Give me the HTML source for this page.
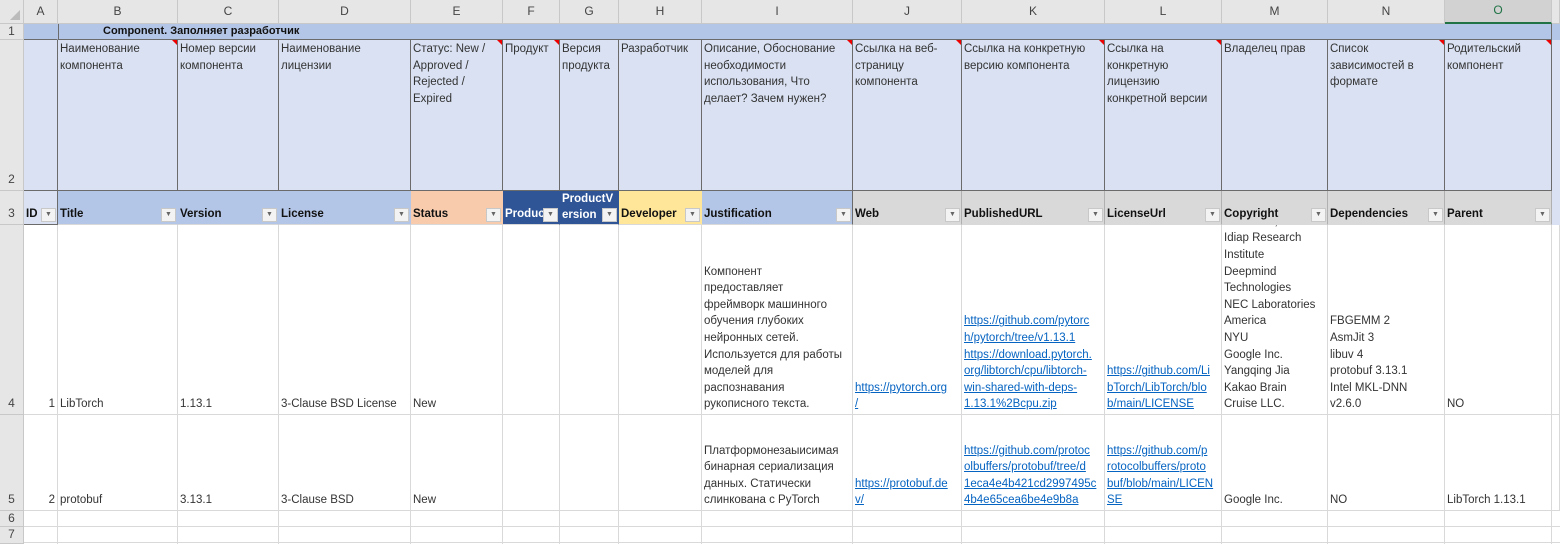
<!DOCTYPE html>
<html><head><meta charset="utf-8"><style>
*{margin:0;padding:0;box-sizing:border-box}
body{width:1560px;height:544px;overflow:hidden;background:#fff;font-family:"Liberation Sans","DejaVu Sans",sans-serif;font-size:11.5px;color:#333;position:relative}
.c{position:absolute;overflow:hidden;border-right:1px solid #d9d9d9;border-bottom:1px solid #d9d9d9;line-height:16.6px;padding:0 2px 1px 2px;display:flex;flex-direction:column;justify-content:flex-end;white-space:nowrap}
.t{justify-content:flex-start;padding-top:1px}
.h{background:#e6e6e6;color:#444;justify-content:center;align-items:center;border-color:#c8c8c8;font-size:12px}
.dk{border-right:1px solid #6b6b6b;border-bottom:1px solid #6b6b6b}
.b{font-weight:bold;color:#111;font-size:11.5px}
.r{align-items:flex-end}
a{color:#0563c1;text-decoration:underline}
.dd{position:absolute;width:15px;height:14px;background:#f3f3f3;border:1px solid #c8c8c8;font-size:7px;color:#666;text-align:center;line-height:12px}
.tri{position:absolute;width:0;height:0;border-top:5px solid #e00;border-left:5px solid transparent}
</style></head><body>

<div class="c h" style="left:0;top:0;width:24px;height:24px"><svg width="10" height="10" style="position:absolute;right:3px;bottom:3px"><path d="M10 0L10 10L0 10Z" fill="#bbb"/></svg></div>
<div class="c h" style="left:24px;top:0;width:34px;height:24px">A</div>
<div class="c h" style="left:58px;top:0;width:120px;height:24px">B</div>
<div class="c h" style="left:178px;top:0;width:101px;height:24px">C</div>
<div class="c h" style="left:279px;top:0;width:132px;height:24px">D</div>
<div class="c h" style="left:411px;top:0;width:92px;height:24px">E</div>
<div class="c h" style="left:503px;top:0;width:57px;height:24px">F</div>
<div class="c h" style="left:560px;top:0;width:59px;height:24px">G</div>
<div class="c h" style="left:619px;top:0;width:83px;height:24px">H</div>
<div class="c h" style="left:702px;top:0;width:151px;height:24px">I</div>
<div class="c h" style="left:853px;top:0;width:109px;height:24px">J</div>
<div class="c h" style="left:962px;top:0;width:143px;height:24px">K</div>
<div class="c h" style="left:1105px;top:0;width:117px;height:24px">L</div>
<div class="c h" style="left:1222px;top:0;width:106px;height:24px">M</div>
<div class="c h" style="left:1328px;top:0;width:117px;height:24px">N</div>
<div class="c h" style="left:1445px;top:0;width:107px;height:24px;background:#d2d2d2;color:#217346;border-bottom:2px solid #217346">O</div>
<div class="c h" style="left:1552px;top:0;width:8px;height:24px"></div>

<div class="c h" style="left:0;top:24px;width:24px;height:16px">1</div>
<div class="c h" style="left:0;top:40px;width:24px;height:151px;justify-content:flex-end;padding-bottom:2px">2</div>
<div class="c h" style="left:0;top:191px;width:24px;height:34px;justify-content:flex-end;padding-bottom:2px">3</div>
<div class="c h" style="left:0;top:225px;width:24px;height:190px;justify-content:flex-end;padding-bottom:2px">4</div>
<div class="c h" style="left:0;top:415px;width:24px;height:96px;justify-content:flex-end;padding-bottom:2px">5</div>
<div class="c h" style="left:0;top:511px;width:24px;height:16px">6</div>
<div class="c h" style="left:0;top:527px;width:24px;height:17px">7</div>

<div class="c dk" style="left:24px;top:24px;width:34px;height:16px;background:#b4c6e7;border-right:1px solid #b4c6e7"></div>
<div class="c dk b" style="left:58px;top:24px;width:1494px;height:16px;background:#b4c6e7;border-left:1px solid #6b6b6b;padding-left:44px;justify-content:center;font-size:11px">Component. Заполняет разработчик</div>
<div class="c" style="left:1552px;top:24px;width:8px;height:16px;background:#b4c6e7;border:0"></div>

<div class="c dk t" style="left:24px;top:40px;width:34px;height:151px;background:#d9e1f2;border-right:1px solid #6b6b6b"></div>
<div class="c dk t" style="left:58px;top:40px;width:120px;height:151px;background:#d9e1f2">Наименование<br>компонента</div>
<div class="c dk t" style="left:178px;top:40px;width:101px;height:151px;background:#d9e1f2">Номер версии<br>компонента</div>
<div class="c dk t" style="left:279px;top:40px;width:132px;height:151px;background:#d9e1f2">Наименование<br>лицензии</div>
<div class="c dk t" style="left:411px;top:40px;width:92px;height:151px;background:#d9e1f2">Статус: New /<br>Approved /<br>Rejected /<br>Expired</div>
<div class="c dk t" style="left:503px;top:40px;width:57px;height:151px;background:#d9e1f2">Продукт</div>
<div class="c dk t" style="left:560px;top:40px;width:59px;height:151px;background:#d9e1f2">Версия<br>продукта</div>
<div class="c dk t" style="left:619px;top:40px;width:83px;height:151px;background:#d9e1f2">Разработчик</div>
<div class="c dk t" style="left:702px;top:40px;width:151px;height:151px;background:#d9e1f2">Описание, Обоснование<br>необходимости<br>использования, Что<br>делает? Зачем нужен?</div>
<div class="c dk t" style="left:853px;top:40px;width:109px;height:151px;background:#d9e1f2">Ссылка на веб-<br>страницу<br>компонента</div>
<div class="c dk t" style="left:962px;top:40px;width:143px;height:151px;background:#d9e1f2">Ссылка на конкретную<br>версию компонента</div>
<div class="c dk t" style="left:1105px;top:40px;width:117px;height:151px;background:#d9e1f2">Ссылка на<br>конкретную<br>лицензию<br>конкретной версии</div>
<div class="c dk t" style="left:1222px;top:40px;width:106px;height:151px;background:#d9e1f2">Владелец прав</div>
<div class="c dk t" style="left:1328px;top:40px;width:117px;height:151px;background:#d9e1f2">Список<br>зависимостей в<br>формате</div>
<div class="c dk t" style="left:1445px;top:40px;width:107px;height:151px;background:#d9e1f2">Родительский<br>компонент</div>
<div class="c" style="left:1552px;top:40px;width:8px;height:151px;background:#d9e1f2;border:0"></div>

<div class="tri" style="left:172px;top:40px"></div>
<div class="tri" style="left:497px;top:40px"></div>
<div class="tri" style="left:554px;top:40px"></div>
<div class="tri" style="left:847px;top:40px"></div>
<div class="tri" style="left:956px;top:40px"></div>
<div class="tri" style="left:1099px;top:40px"></div>
<div class="tri" style="left:1216px;top:40px"></div>
<div class="tri" style="left:1439px;top:40px"></div>
<div class="tri" style="left:1546px;top:40px"></div>

<div class="c b" style="left:24px;top:191px;width:34px;height:34px;background:#d9e1f2;border-color:#6b6b6b">ID</div>
<div class="c b" style="left:58px;top:191px;width:120px;height:34px;background:#b4c6e7;border-right-color:#b4c6e7">Title</div>
<div class="c b" style="left:178px;top:191px;width:101px;height:34px;background:#b4c6e7;border-right-color:#b4c6e7">Version</div>
<div class="c b" style="left:279px;top:191px;width:132px;height:34px;background:#b4c6e7;border-right-color:#b4c6e7">License</div>
<div class="c b" style="left:411px;top:191px;width:92px;height:34px;background:#f8cbad;border-right-color:#f8cbad">Status</div>
<div class="c b" style="left:503px;top:191px;width:57px;height:34px;background:#2f5597;color:#fff;border-right-color:#2f5597">Produc</div>
<div class="c b" style="left:560px;top:191px;width:59px;height:34px;background:#2f5597;color:#fff;border-right-color:#2f5597;line-height:16px">ProductV<br>ersion</div>
<div class="c b" style="left:619px;top:191px;width:83px;height:34px;background:#ffe699;border-right-color:#ffe699">Developer</div>
<div class="c b" style="left:702px;top:191px;width:151px;height:34px;background:#b4c6e7;border-right-color:#6b6b6b">Justification</div>
<div class="c b" style="left:853px;top:191px;width:109px;height:34px;background:#d9d9d9;border-right-color:#b0b0b0">Web</div>
<div class="c b" style="left:962px;top:191px;width:143px;height:34px;background:#d9d9d9;border-right-color:#b0b0b0">PublishedURL</div>
<div class="c b" style="left:1105px;top:191px;width:117px;height:34px;background:#d9d9d9;border-right-color:#b0b0b0">LicenseUrl</div>
<div class="c b" style="left:1222px;top:191px;width:106px;height:34px;background:#d9d9d9;border-right-color:#b0b0b0">Copyright</div>
<div class="c b" style="left:1328px;top:191px;width:117px;height:34px;background:#d9d9d9;border-right-color:#b0b0b0">Dependencies</div>
<div class="c b" style="left:1445px;top:191px;width:107px;height:34px;background:#d9d9d9;border-right-color:#b0b0b0">Parent</div>
<div class="c" style="left:1552px;top:191px;width:8px;height:34px;background:#d9e1f2;border:0"></div>
<div style="position:absolute;left:24px;top:190px;width:1528px;height:1px;background:#6b6b6b"></div>

<div class="dd" style="left:41px;top:208px">▼</div>
<div class="dd" style="left:161px;top:208px">▼</div>
<div class="dd" style="left:262px;top:208px">▼</div>
<div class="dd" style="left:394px;top:208px">▼</div>
<div class="dd" style="left:486px;top:208px">▼</div>
<div class="dd" style="left:543px;top:208px">▼</div>
<div class="dd" style="left:602px;top:208px">▼</div>
<div class="dd" style="left:685px;top:208px">▼</div>
<div class="dd" style="left:836px;top:208px">▼</div>
<div class="dd" style="left:945px;top:208px">▼</div>
<div class="dd" style="left:1088px;top:208px">▼</div>
<div class="dd" style="left:1205px;top:208px">▼</div>
<div class="dd" style="left:1311px;top:208px">▼</div>
<div class="dd" style="left:1428px;top:208px">▼</div>
<div class="dd" style="left:1535px;top:208px">▼</div>

<div class="c r" style="left:24px;top:225px;width:34px;height:190px">1</div>
<div class="c" style="left:58px;top:225px;width:120px;height:190px">LibTorch</div>
<div class="c" style="left:178px;top:225px;width:101px;height:190px">1.13.1</div>
<div class="c" style="left:279px;top:225px;width:132px;height:190px">3-Clause BSD License</div>
<div class="c" style="left:411px;top:225px;width:92px;height:190px">New</div>
<div class="c" style="left:503px;top:225px;width:57px;height:190px"></div>
<div class="c" style="left:560px;top:225px;width:59px;height:190px"></div>
<div class="c" style="left:619px;top:225px;width:83px;height:190px"></div>
<div class="c" style="left:702px;top:225px;width:151px;height:190px">Компонент<br>предоставляет<br>фреймворк машинного<br>обучения глубоких<br>нейронных сетей.<br>Используется для работы<br>моделей для<br>распознавания<br>рукописного текста.</div>
<div class="c" style="left:853px;top:225px;width:109px;height:190px"><a>https://pytorch.org<br>/</a></div>
<div class="c" style="left:962px;top:225px;width:143px;height:190px"><a>https://github.com/pytorc<br>h/pytorch/tree/v1.13.1<br>https://download.pytorch.<br>org/libtorch/cpu/libtorch-<br>win-shared-with-deps-<br>1.13.1%2Bcpu.zip</a></div>
<div class="c" style="left:1105px;top:225px;width:117px;height:190px"><a>https://github.com/Li<br>bTorch/LibTorch/blo<br>b/main/LICENSE</a></div>
<div class="c" style="left:1222px;top:225px;width:106px;height:190px">Facebook, Inc<br>Idiap Research<br>Institute<br>Deepmind<br>Technologies<br>NEC Laboratories<br>America<br>NYU<br>Google Inc.<br>Yangqing Jia<br>Kakao Brain<br>Cruise LLC.</div>
<div class="c" style="left:1328px;top:225px;width:117px;height:190px">FBGEMM 2<br>AsmJit 3<br>libuv 4<br>protobuf 3.13.1<br>Intel MKL-DNN<br>v2.6.0</div>
<div class="c" style="left:1445px;top:225px;width:107px;height:190px">NO</div>
<div class="c" style="left:1552px;top:225px;width:8px;height:190px"></div>

<div class="c r" style="left:24px;top:415px;width:34px;height:96px">2</div>
<div class="c" style="left:58px;top:415px;width:120px;height:96px">protobuf</div>
<div class="c" style="left:178px;top:415px;width:101px;height:96px">3.13.1</div>
<div class="c" style="left:279px;top:415px;width:132px;height:96px">3-Clause BSD</div>
<div class="c" style="left:411px;top:415px;width:92px;height:96px">New</div>
<div class="c" style="left:503px;top:415px;width:57px;height:96px"></div>
<div class="c" style="left:560px;top:415px;width:59px;height:96px"></div>
<div class="c" style="left:619px;top:415px;width:83px;height:96px"></div>
<div class="c" style="left:702px;top:415px;width:151px;height:96px">Платформонезаыисимая<br>бинарная сериализация<br>данных. Статически<br>слинкована с PyTorch</div>
<div class="c" style="left:853px;top:415px;width:109px;height:96px"><a>https://protobuf.de<br>v/</a></div>
<div class="c" style="left:962px;top:415px;width:143px;height:96px"><a>https://github.com/protoc<br>olbuffers/protobuf/tree/d<br>1eca4e4b421cd2997495c<br>4b4e65cea6be4e9b8a</a></div>
<div class="c" style="left:1105px;top:415px;width:117px;height:96px"><a>https://github.com/p<br>rotocolbuffers/proto<br>buf/blob/main/LICEN<br>SE</a></div>
<div class="c" style="left:1222px;top:415px;width:106px;height:96px">Google Inc.</div>
<div class="c" style="left:1328px;top:415px;width:117px;height:96px">NO</div>
<div class="c" style="left:1445px;top:415px;width:107px;height:96px">LibTorch 1.13.1</div>
<div class="c" style="left:1552px;top:415px;width:8px;height:96px"></div>

<div style="position:absolute;left:24px;top:511px;width:1536px;height:33px;
background-image:linear-gradient(to bottom,transparent 15px,#d9d9d9 15px,#d9d9d9 16px,transparent 16px,transparent 31px,#d9d9d9 31px,#d9d9d9 32px,transparent 32px)"></div>
<div style="position:absolute;top:511px;height:33px;left:0;width:1560px">
<div style="position:absolute;left:57px;width:1px;height:33px;background:#d9d9d9"></div>
<div style="position:absolute;left:177px;width:1px;height:33px;background:#d9d9d9"></div>
<div style="position:absolute;left:278px;width:1px;height:33px;background:#d9d9d9"></div>
<div style="position:absolute;left:410px;width:1px;height:33px;background:#d9d9d9"></div>
<div style="position:absolute;left:502px;width:1px;height:33px;background:#d9d9d9"></div>
<div style="position:absolute;left:559px;width:1px;height:33px;background:#d9d9d9"></div>
<div style="position:absolute;left:618px;width:1px;height:33px;background:#d9d9d9"></div>
<div style="position:absolute;left:701px;width:1px;height:33px;background:#d9d9d9"></div>
<div style="position:absolute;left:852px;width:1px;height:33px;background:#d9d9d9"></div>
<div style="position:absolute;left:961px;width:1px;height:33px;background:#d9d9d9"></div>
<div style="position:absolute;left:1104px;width:1px;height:33px;background:#d9d9d9"></div>
<div style="position:absolute;left:1221px;width:1px;height:33px;background:#d9d9d9"></div>
<div style="position:absolute;left:1327px;width:1px;height:33px;background:#d9d9d9"></div>
<div style="position:absolute;left:1444px;width:1px;height:33px;background:#d9d9d9"></div>
<div style="position:absolute;left:1551px;width:1px;height:33px;background:#d9d9d9"></div>
</div>
</body></html>
